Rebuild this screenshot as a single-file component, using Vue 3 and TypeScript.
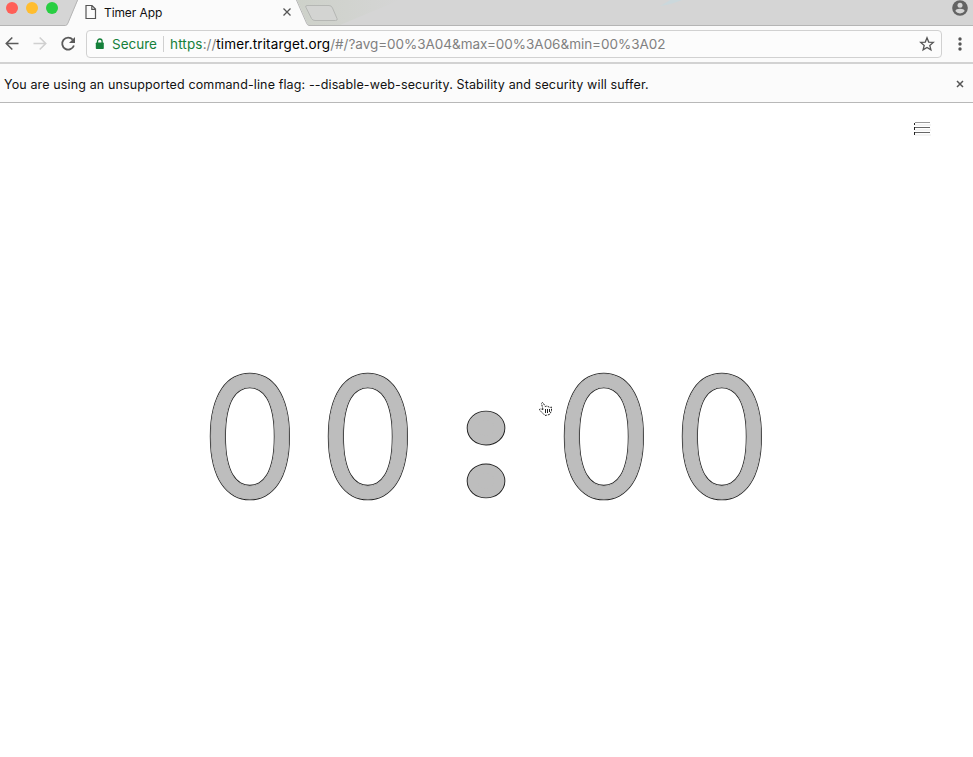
<script setup lang="ts">
interface UrlPart { text: string; tone: string }

const lights: string[] = ['red', 'yellow', 'green']
const url: UrlPart[] = [
  { text: 'https', tone: 'scheme' },
  { text: '://', tone: 'muted' },
  { text: 'timer.tritarget.org', tone: 'host' },
  { text: '/#/?avg=00%3A04&max=00%3A06&min=00%3A02', tone: 'muted query' },
]
const clock: string[] = '00:00'.split('')
</script>

<template>
  <div class="window">
    <header class="tabstrip">
      <svg class="strip-art" width="973" height="26" viewBox="0 0 973 26">
        <defs>
          <linearGradient id="tint" x1="0" x2="1">
            <stop offset="0" stop-color="#cdd1c9" />
            <stop offset="1" stop-color="#d5d5d5" />
          </linearGradient>
        </defs>
        <path d="M294 0H400L340 25H303Z" fill="url(#tint)" />
        <path d="M660 6Q667 2 670 0H682Q670 5 660 6Z" fill="#cbd8dc" />
        <path d="M0 25.5H65.5Q67 25.5 68 23L78 0H297L307 23Q308 25.5 310 25.5H973V26H0Z" fill="#fbfbfb" />
        <path d="M0 25.5H65.5Q67 25.5 68 23L78 -1M296 -1L306.500 23Q307.500 25.500 309 25.500H973" fill="none" stroke="#b5b5b5" />
        <path d="M307 5.500H329Q331.500 5.500 332.500 8L337 18.500Q338 20.500 335.500 20.500H315Q312.500 20.500 311.500 18.500L306 7.500Q305 5.500 307 5.500Z" fill="#d3d4d2" stroke="#b5b7b4" />
      </svg>
      <div class="lights"><i v-for="c in lights" :key="c" :class="c"></i></div>
      <div class="tab">
        <svg width="12" height="16" viewBox="0 0 12 16" fill="none" stroke="#555" stroke-width="1.200">
          <path d="M1 1.500H7L10.500 5V14.500H1ZM6.800 1.500V5.300H10.500" />
        </svg>
        <span class="tab-title">Timer App</span>
        <svg width="10" height="10" viewBox="0 0 10 10" stroke="#555" stroke-width="1.300"><path d="M1.500 1.500L8.500 8.500M8.500 1.500L1.500 8.500" /></svg>
      </div>
      <svg class="person" width="16" height="16" viewBox="0 0 16 16">
        <circle cx="8" cy="8" r="7.800" fill="#636363" />
        <circle cx="8" cy="5.200" r="2.500" fill="#d5d5d5" />
        <path d="M3.300 11Q4 8.700 8 8.700T12.700 11Q11 13.400 8 13.400T3.300 11Z" fill="#d5d5d5" />
      </svg>
    </header>

    <nav class="toolbar">
      <svg class="navs" width="86" height="34" viewBox="0 0 86 34" fill="none" stroke-width="1.600">
        <path d="M18.500 15.500H6.500M12.300 9.500L6.300 15.500L12.300 21.500" stroke="#5a5a5a" />
        <path d="M33.500 15.500H45.500M39.700 9.500L45.700 15.500L39.700 21.500" stroke="#d0d0d0" />
        <path d="M72.700 11.600A6 6 0 1 0 73.900 17.500" stroke="#5a5a5a" stroke-width="1.800" />
        <path d="M75 9V15H69Z" fill="#5a5a5a" />
      </svg>
      <div class="omnibox">
        <svg class="lock" width="10" height="12" viewBox="0 0 10 12">
          <path d="M2.500 5V3.300A2.300 2.300 0 0 1 7.100 3.300V5" fill="none" stroke="#15803a" stroke-width="1.300" />
          <rect x=".8" y="4.500" width="8" height="6.500" rx=".7" fill="#15803a" />
        </svg>
        <span class="secure">Secure</span>
        <i class="divider"></i>
        <span class="url"><span v-for="p in url" :key="p.text" :class="p.tone">{{ p.text }}</span></span>
        <svg class="star" width="16" height="16" viewBox="0 0 16 16" fill="none" stroke="#555" stroke-width="1.300">
          <path d="M8 1.800L9.700 6.100L14.300 6.400L10.800 9.400L11.900 13.900L8 11.400L4.100 13.900L5.200 9.400L1.700 6.400L6.300 6.100Z" />
        </svg>
      </div>
      <svg class="more" width="6" height="16" viewBox="0 0 6 16" fill="#555">
        <circle cx="3" cy="3" r="1.700" /><circle cx="3" cy="8" r="1.700" /><circle cx="3" cy="13" r="1.700" />
      </svg>
    </nav>

    <div class="infobar">
      <span class="warning">You are using an unsupported command-line flag: --disable-web-security. Stability and security will suffer.</span>
      <svg width="8" height="8" viewBox="0 0 8 8" stroke="#555" stroke-width="1.500"><path d="M1 1L7 7M7 1L1 7" /></svg>
    </div>

    <main class="page">
      <svg class="menu" width="18" height="15" viewBox="0 0 18 15" shape-rendering="crispEdges">
        <path d="M1 3H17V5H1ZM1 8H17V10H1ZM1 13H17V15H1Z" fill="#f4f4f4" />
        <path d="M1 1.500H16" stroke="#999" /><path d="M1 6.500H16M1 11.500H16" stroke="#666" />
        <path d="M.5 2V4M.5 6V9M.5 11V14" stroke="#222" />
      </svg>
      <div class="timer">
        <span v-for="(ch, i) in clock" :key="i" class="cell">
          <span class="glyph" :class="ch === ':' ? 'colon' : 'digit'" :data-ch="ch">{{ ch }}</span>
        </span>
      </div>
      <svg class="cursor" width="16" height="16" viewBox="0 0 16 16" fill="#fff" stroke="#222" stroke-width="1">
        <path d="M5 8.500L3.500 2.500Q4.500 .5 5.500 2.500L7.200 5.500L9 5L12 6.500L13.500 6V10L11.500 13.500L7 14.500L1.500 9Q1.500 7.500 3 8Z" stroke-dasharray="2 1" />
        <path d="M7.500 8V12M9.500 8V12M11.500 8V11" />
      </svg>
    </main>
  </div>
</template>

<style>
body { background: #fff; overflow: hidden; }
</style>

<style scoped>
.window { width: 973px; height: 757px; display: flex; flex-direction: column; overflow: hidden; font-family: Inter, Roboto, sans-serif; }
.window svg { display: block; flex: none; }
.tabstrip { position: relative; height: 26px; flex: none; background: #d5d5d5; display: flex; }
.strip-art { position: absolute; left: 0; top: 0; }
.lights { position: relative; display: flex; gap: 8px; padding: 2px 0 0 6px; width: 79px; box-sizing: border-box; }
.lights i { width: 12px; height: 12px; border-radius: 50%; }
.red { background: #ff5f57; }
.yellow { background: #ffbd2e; }
.green { background: #28ce42; }
.tab { position: relative; display: flex; align-items: center; width: 207px; height: 24px; padding-left: 6px; box-sizing: content-box; }
.tab-title { margin-left: 7px; flex: 1; font-size: 12px; letter-spacing: -.1px; color: #111; }
.person { position: relative; margin-left: auto; margin-right: 5px; }
.toolbar { height: 36px; flex: none; display: flex; align-items: flex-start; background: #fbfbfb; padding-top: 2px; box-sizing: border-box; }
.omnibox { display: flex; align-items: center; width: 856px; height: 28px; margin-top: 2px; border: 1px solid #d1d1d1; border-radius: 4px; box-sizing: border-box; font-size: 13.5px; background: #fcfcfc; white-space: nowrap; }
.lock { margin-left: 8px; }
.secure { margin-left: 7px; width: 51px; color: #15803a; }
.divider { width: 1px; height: 16px; background: #d0d0d0; margin-right: 6px; }
.scheme { color: #15803a; letter-spacing: .15px; }
.muted { color: #808080; }
.host { color: #000; letter-spacing: .15px; }
.query { letter-spacing: -.03px; }
.star { margin-left: auto; margin-right: 6px; }
.more { margin: 8px 0 0 15px; }
.infobar { height: 41px; flex: none; display: flex; align-items: center; justify-content: space-between; background: #fbfbfb; border-top: 2px solid #d2d2d2; border-bottom: 1px solid #b8b8b8; box-sizing: border-box; padding: 2px 9px 0 4px; }
.warning { font-size: 12.5px; letter-spacing: .13px; color: #111; white-space: nowrap; }
.page { position: relative; flex: 1; background: #fff; display: flex; flex-direction: column; }
.menu { align-self: flex-end; margin: 18px 41px 0 0; }
.timer { display: flex; margin: 235px 0 0 190.500px; height: 130px; }
.cell { width: 118.200px; height: 130px; display: flex; justify-content: center; align-items: center; line-height: 130px; }
.glyph { position: relative; z-index: 0; font-family: Lato, sans-serif; color: #bdbdbd; }
.glyph::before { content: attr(data-ch); position: absolute; z-index: -1; left: 0; top: 0; color: #1c1c1c; }
.digit { font-size: 172px; -webkit-text-stroke: 1px #bdbdbd; transform: translateY(-3px) scale(.87, .99); }
.digit::before { -webkit-text-stroke: 2.700px #1c1c1c; }
.colon { font-weight: 900; font-size: 150px; -webkit-text-stroke: 9px #bdbdbd; transform: translate(.5px, -2px) scaleX(1.100); }
.colon::before { -webkit-text-stroke: 10.700px #1c1c1c; }
.cursor { position: absolute; left: 538px; top: 298px; }
</style>
